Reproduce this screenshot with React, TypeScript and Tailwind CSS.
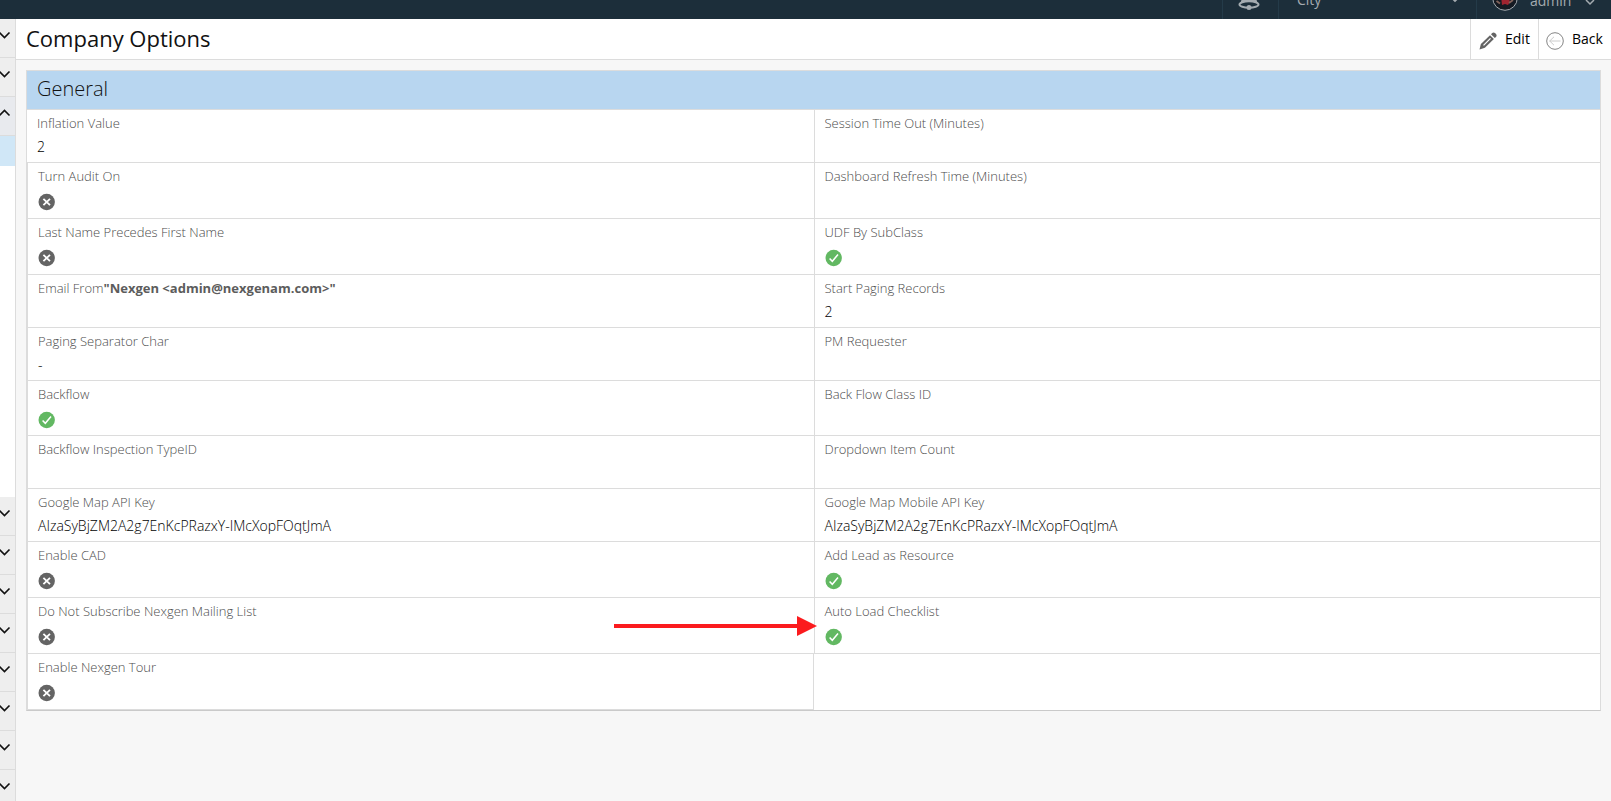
import React from 'react';

type Value = string | boolean | undefined;

interface Field {
  label: string;
  value?: Value;
  note?: string;
}

const rows: { height: string; fields: Field[] }[] = [
  { height: 'h-[53px]', fields: [{ label: 'Inflation Value', value: '2' }, { label: 'Session Time Out (Minutes)' }] },
  { height: 'h-14', fields: [{ label: 'Turn Audit On', value: false }, { label: 'Dashboard Refresh Time (Minutes)' }] },
  { height: 'h-14', fields: [{ label: 'Last Name Precedes First Name', value: false }, { label: 'UDF By SubClass', value: true }] },
  {
    height: 'h-[53px]',
    fields: [{ label: 'Email From', note: '"Nexgen <admin@nexgenam.com>"' }, { label: 'Start Paging Records', value: '2' }],
  },
  { height: 'h-[53px]', fields: [{ label: 'Paging Separator Char', value: '-' }, { label: 'PM Requester' }] },
  { height: 'h-[55px]', fields: [{ label: 'Backflow', value: true }, { label: 'Back Flow Class ID' }] },
  { height: 'h-[53px]', fields: [{ label: 'Backflow Inspection TypeID' }, { label: 'Dropdown Item Count' }] },
  {
    height: 'h-[53px]',
    fields: [
      { label: 'Google Map API Key', value: 'AIzaSyBjZM2A2g7EnKcPRazxY-IMcXopFOqtJmA' },
      { label: 'Google Map Mobile API Key', value: 'AIzaSyBjZM2A2g7EnKcPRazxY-IMcXopFOqtJmA' },
    ],
  },
  { height: 'h-14', fields: [{ label: 'Enable CAD', value: false }, { label: 'Add Lead as Resource', value: true }] },
  { height: 'h-14', fields: [{ label: 'Do Not Subscribe Nexgen Mailing List', value: false }, { label: 'Auto Load Checklist', value: true }] },
  { height: 'h-14', fields: [{ label: 'Enable Nexgen Tour', value: false }] },
];

const StatusIcon = ({ on }: { on: boolean }) => (
  <svg role="img" aria-label={on ? 'Yes' : 'No'} viewBox="0 0 18 18" className="size-[18px]" fill="none">
    <circle cx="8.7" cy="9" r="8.2" fill={on ? '#62b862' : '#646464'} />
    {on ? (
      <path d="M4.600 9.400l2.700 2.900L13 5.500" stroke="#fff" strokeWidth="1.500" />
    ) : (
      <path d="M5.400 5.800l6.600 6.400M12 5.800l-6.600 6.400" stroke="#fff" strokeWidth="1.800" />
    )}
  </svg>
);

const FieldValue = ({ value }: { value: Value }) => {
  if (typeof value === 'boolean') {
    return (
      <dd className="pt-[7px]">
        <StatusIcon on={value} />
      </dd>
    );
  }
  return <dd className="pt-1 text-sm leading-5 text-black">{value}</dd>;
};

const Chevron = ({ up = false }: { up?: boolean }) => (
  <svg viewBox="0 0 12 8" className="h-2 w-3 shrink-0" fill="none" stroke="#111" strokeWidth="1.6">
    <path d={up ? 'M.5 6.500l5-5 5 5' : 'M.5 1.500l5 5 5-5'} />
  </svg>
);

const MenuSection = ({ open = false }: { open?: boolean }) => (
  <button
    type="button"
    aria-label="Menu section"
    aria-expanded={open}
    className={`flex h-[39px] w-full shrink-0 items-center justify-end border-b border-[#dcdcdc] pr-1 pb-1.5 ${open ? 'bg-[#e8eaee]' : 'bg-[#eeeeee]'}`}
  >
    <Chevron up={open} />
  </button>
);

const Sidebar = () => (
  <nav className="flex w-4 shrink-0 flex-col overflow-hidden border-r border-[#dcdcdc] bg-white">
    <MenuSection />
    <MenuSection />
    <MenuSection open />
    <a href="#company-options" aria-label="Company Options" className="h-[30px] shrink-0 bg-[#d0e7f7]"></a>
    <div className="h-[331px] shrink-0"></div>
    {Array.from({ length: 8 }).map((_, index) => (
      <MenuSection key={index} />
    ))}
  </nav>
);

const TopBar = () => (
  <header className="flex h-[19px] shrink-0 items-end justify-end overflow-hidden bg-[#1c2e3a] text-[#a4abb0]">
    <div className="flex h-[38px] shrink-0 items-stretch text-sm">
      <button type="button" aria-label="Notifications" className="flex w-14 items-end justify-center border-l border-[#243b49] pr-1 pb-2">
        <svg viewBox="0 0 22 22" className="size-[22px]">
          <path d="M2 14C5 11 4 4 11 2c7 2 6 9 9 12z" fill="#a4abb0" />
          <ellipse cx="11" cy="15.500" rx="9.500" ry="3.200" fill="#1c2e3a" stroke="#a4abb0" strokeWidth="2" />
          <path d="M2 14.500c3-3 15-3 18 0l-2-4H4z" fill="#a4abb0" />
          <circle cx="11" cy="18.500" r="2.500" fill="#a4abb0" />
        </svg>
      </button>
      <button type="button" className="flex w-[198px] items-center justify-between border-l border-[#243b49] pr-[17px] pl-[18px]">
        City
        <svg viewBox="0 0 8 6" className="h-1.5 w-2" fill="none" stroke="#a4abb0" strokeWidth="1.8">
          <path d="M1 1l3 3 3-3" />
        </svg>
      </button>
      <button type="button" className="flex w-[135px] items-center border-l border-[#243b49] pl-[15px]">
        <svg viewBox="0 0 26 26" className="mb-1 size-[26px]">
          <circle cx="13" cy="13" r="12.300" fill="#141a22" stroke="#a4abb0" strokeWidth="1" />
          <path d="M9 11l3 3 4-3 2 6-2 3-3-1-3 1z" fill="#a02430" />
          <path d="M4.500 16l3.500 2.500M17 18l4-3" stroke="#80625a" strokeWidth="1.800" />
        </svg>
        <span className="mt-0.5 ml-3">admin</span>
        <svg viewBox="0 0 10 7" className="mt-1 ml-3.5 h-[7px] w-2.5" fill="none" stroke="#a4abb0" strokeWidth="1.5">
          <path d="M1 1l4 4 4-4" />
        </svg>
      </button>
    </div>
  </header>
);

const TitleBar = () => (
  <div className="flex h-[41px] shrink-0 items-stretch border-b border-[#dcdcdc] bg-white">
    <h1 className="flex-1 pl-2.5 text-[22px] leading-[38px] text-[#111]">Company Options</h1>
    <button type="button" className="flex w-[68px] items-center gap-2 border-l border-[#dcdcdc] pl-2 text-sm">
      <svg viewBox="0 0 18 18" className="mt-1 size-[18px] shrink-0">
        <path d="M.5 17.500l1.400-5.500L11 3.200l3.900 3.900-9 8.700z" fill="#646464" />
        <path d="M4.500 13.300l7-7" stroke="#fff" strokeWidth="1.200" />
        <path d="M12 2.300l1.200-1.200c.8-.7 2-.7 2.800 0l1 1c.8.8.8 2 0 2.800l-1.200 1.200z" fill="#646464" />
      </svg>
      Edit
    </button>
    <button type="button" className="flex w-[73px] items-center gap-2 border-l border-[#dcdcdc] pl-[7px] text-sm">
      <svg viewBox="0 0 18 18" className="mt-1 size-[18px] shrink-0" fill="none">
        <circle cx="9" cy="9" r="8.300" stroke="#777" strokeWidth="0.900" />
        <path d="M14.500 9h-11M8 4.800L3.700 9 8 13.200" stroke="#ccc" strokeWidth="1" />
      </svg>
      Back
    </button>
  </div>
);

const Arrow = () => (
  <svg viewBox="0 0 203 20" className="pointer-events-none absolute right-[-3px] bottom-[17px] z-10 h-5 w-[203px]" fill="#fb1b1e">
    <rect x="0" y="8" width="184" height="4" />
    <path d="M183 0l20 10-20 10z" />
  </svg>
);

const GeneralPanel = () => (
  <section className="mx-2.5 mt-2.5 border border-[#dcdcdc] border-b-[#cacaca] bg-white font-light">
    <h2 className="h-[39px] border-b border-[#dcdcdc] bg-[#b8d6f0] pl-2.5 text-xl leading-9 text-[#111]">General</h2>
    {rows.map(({ height, fields }, rowIndex) => (
      <dl key={rowIndex} className={`grid grid-cols-2 ${height}`}>
        {fields.map(({ label, value, note }, index) => (
          <div
            key={label}
            className={`relative border-b border-[#dcdcdc] pt-[3px] pl-2.5 ${
              index === 1 || rowIndex > 0 ? 'border-l' : ''
            } ${fields.length === 1 ? 'border-r' : ''}`}
          >
            <dt className="text-[13px] leading-5 text-[#4c4c4c]">
              {label}
              {note && <strong className="font-bold text-[#5c5c5c]">{note}</strong>}
            </dt>
            <FieldValue value={value} />
            {label.startsWith('Do Not Subscribe') && <Arrow />}
          </div>
        ))}
      </dl>
    ))}
  </section>
);

const App = () => {
  return (
    <div className="flex h-screen flex-col overflow-hidden bg-[#f7f7f7] font-['Open_Sans','Noto_Sans',sans-serif] text-black">
      <TopBar />
      <div className="flex min-h-0 flex-1">
        <Sidebar />
        <main className="flex min-w-0 flex-1 flex-col">
          <TitleBar />
          <GeneralPanel />
        </main>
      </div>
    </div>
  );
};

export default App;
